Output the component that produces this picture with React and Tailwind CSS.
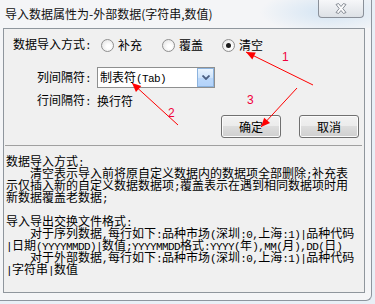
const lines = [
  "数据导入方式:",
  "    清空表示导入前将原自定义数据内的数据项全部删除;补充表",
  "示仅插入新的自定义数据数据项;覆盖表示在遇到相同数据项时用",
  "新数据覆盖老数据;",
  "",
  "导入导出交换文件格式:",
  "    对于序列数据,每行如下:品种市场(深圳:0,上海:1)|品种代码",
  "|日期(YYYYMMDD)|数值;YYYYMMDD格式:YYYY(年),MM(月),DD(日)",
  "    对于外部数据,每行如下:品种市场(深圳:0,上海:1)|品种代码",
  "|字符串|数值",
];

// SimSun style: ascii runs are half width (6px)
function Mixed({ text }) {
  const parts = text.split(/([\x20-\x7e]+)/);
  return parts.map((part, i) =>
    /^[\x20-\x7e]+$/.test(part) ? (
      <span key={i} className="whitespace-pre font-['Liberation_Mono',monospace] text-[11px] tracking-[-0.6px]">
        {part}
      </span>
    ) : (
      <span key={i}>{part}</span>
    )
  );
}

function Radio({ checked }) {
  return (
    <span className="flex h-[13px] w-[13px] items-center justify-center rounded-full border border-[#8f8f8f] bg-[radial-gradient(circle_at_60%_60%,#ffffff_20%,#e2e2e2_90%)]">
      {checked && <span className="h-[5px] w-[5px] rounded-full bg-[#1b1b1b]" />}
    </span>
  );
}

function Option({ label, checked, width }) {
  return (
    <div className={`flex items-center gap-[4px] ${width}`}>
      <Radio checked={checked} />
      <span>{label}</span>
    </div>
  );
}

function WinButton({ children }) {
  return (
    <button className="flex h-[23px] w-[60px] items-center justify-center rounded-[3px] border border-[#707070] bg-[linear-gradient(#f2f2f2_0%,#ebebeb_50%,#dddddd_50%,#cfcfcf_100%)] shadow-[inset_0_0_0_1px_#fbfbfb] leading-[12px]">
      {children}
    </button>
  );
}

function arrowHead(x1, y1, x2, y2) {
  const len = Math.hypot(x2 - x1, y2 - y1);
  const dx = (x2 - x1) / len;
  const dy = (y2 - y1) / len;
  const bx = x2 - dx * 9;
  const by = y2 - dy * 9;
  return `${x2},${y2} ${bx - dy * 4},${by + dx * 4} ${bx + dy * 4},${by - dx * 4}`;
}

const arrows = [
  [313, 85, 246, 52],
  [178, 125, 132, 83],
  [297, 88, 261, 127],
];

export default function App() {
  return (
    <div className="relative h-[304px] w-[375px] overflow-hidden bg-[#e8eff6] font-['Noto_Sans_CJK_SC',sans-serif] text-[12px] text-black">
      <div className="flex h-[301px] w-[372px] flex-col rounded-br-[6px] border-r border-b border-[#8d959e] bg-[#f4f5f7]">
        <div className="flex h-[28px] items-start bg-[radial-gradient(ellipse_70px_22px_at_330px_12px,#d3e4f3,transparent)]">
          <span className="pl-[5px] pt-[8px] leading-[12px] text-[#111]">导入数据属性为-外部数据(字符串,数值)</span>
          <div className="ml-auto mr-[7px] flex h-[18px] w-[46px] items-center justify-center rounded-b-[4px] border border-t-0 border-[#8a9099] bg-[linear-gradient(#f6f7f9,#dde1e6)]">
            <svg width="12" height="11" viewBox="0 0 12 11">
              <path
                d="M1 1.5 L3.5 0.5 L6 3.5 L8.5 0.5 L11 1.5 L7.8 5.5 L11 9.5 L8.5 10.5 L6 7.5 L3.5 10.5 L1 9.5 L4.2 5.5 Z"
                fill="#fbfbfc"
                stroke="#7b818a"
                strokeWidth="0.9"
              />
            </svg>
          </div>
        </div>

        <div className="ml-[3px] flex h-[265px] w-[362px] flex-col border border-[#8f969d] bg-[#f0f0f0] leading-[12px]">
          <div className="mt-[6px] flex h-[20px] items-center pl-[9px]">
            <span className="w-[88px]">
              <Mixed text="数据导入方式:" />
            </span>
            <Option label="补充" width="w-[61px]" />
            <Option label="覆盖" width="w-[60px]" />
            <Option label="清空" checked width="w-[60px]" />
          </div>

          <div className="mt-[12px] flex h-[21px] items-center pl-[33px]">
            <span className="w-[60px]">
              <Mixed text="列间隔符:" />
            </span>
            <div className="flex h-[21px] w-[118px] items-center border border-[#8e8f8f] bg-white">
              <span className="pl-[2px]">
                <Mixed text="制表符(Tab)" />
              </span>
              <div className="ml-auto flex h-[19px] w-[17px] items-center justify-center border border-[#8cb3de] bg-[linear-gradient(#eaf4fe,#cfe4fb_50%,#bcd8fa_51%,#b3d3fa)]">
                <svg width="8" height="5" viewBox="0 0 8 5">
                  <path d="M0.5 0.5 L4 4 L7.5 0.5" fill="none" stroke="#4b5f82" strokeWidth="1.8" />
                </svg>
              </div>
            </div>
          </div>

          <div className="mt-[6px] flex h-[14px] items-center pl-[33px]">
            <span className="w-[60px]">
              <Mixed text="行间隔符:" />
            </span>
            <span>换行符</span>
          </div>

          <div className="mt-[7px] flex justify-end gap-[18px] pr-[5px]">
            <WinButton>确定</WinButton>
            <WinButton>取消</WinButton>
          </div>

          <div className="ml-[1px] mt-[7px] h-px w-[357px] bg-[#a0a0a0]" />

          <div className="mt-[9px] pl-[2px]">
            {lines.map((line, i) => (
              <div key={i} className="h-[12px] whitespace-pre">
                <Mixed text={line} />
              </div>
            ))}
          </div>
        </div>
      </div>

      <svg className="pointer-events-none absolute inset-0" width="375" height="304">
        {arrows.map(([x1, y1, x2, y2], i) => (
          <g key={i}>
            <line x1={x1} y1={y1} x2={x2} y2={y2} stroke="#ff0000" strokeWidth="1" />
            <polygon points={arrowHead(x1, y1, x2, y2)} fill="#ff0000" />
          </g>
        ))}
        <text x="282" y="61" fill="#f0003c" fontSize="12" fontFamily="Liberation Sans, sans-serif">1</text>
        <text x="168" y="117" fill="#f0003c" fontSize="12" fontFamily="Liberation Sans, sans-serif">2</text>
        <text x="247" y="104" fill="#f0003c" fontSize="12" fontFamily="Liberation Sans, sans-serif">3</text>
      </svg>
    </div>
  );
}
